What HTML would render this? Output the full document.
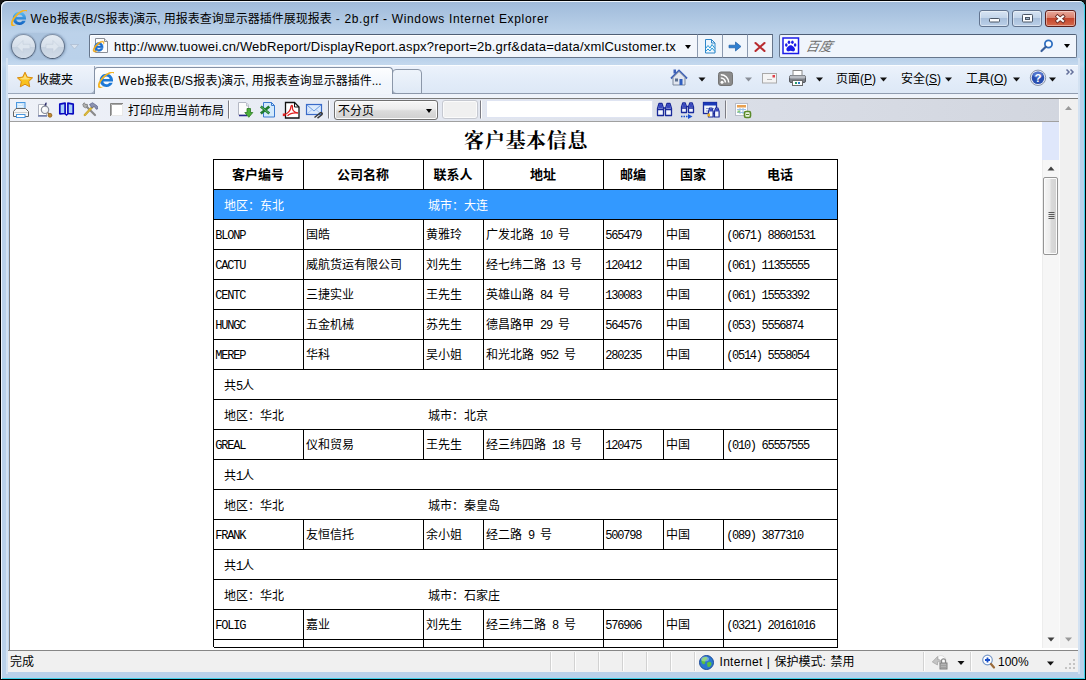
<!DOCTYPE html>
<html lang="zh-CN">
<head>
<meta charset="utf-8">
<title>Web报表(B/S报表)演示, 用报表查询显示器插件展现报表 - 2b.grf - Windows Internet Explorer</title>
<style>
*{box-sizing:border-box;margin:0;padding:0}
html,body{width:1086px;height:680px;overflow:hidden;background:#1a1a1a}
body{font-family:"Liberation Sans","Noto Sans CJK SC",sans-serif;font-size:12px;color:#000;position:relative}
.abs{position:absolute}
#win{position:absolute;left:0;top:0;width:1086px;height:680px;border-radius:7px 7px 0 0;background:#000;overflow:hidden}
#frame{position:absolute;left:1px;top:1px;width:1084px;height:678px;border-radius:6px 6px 0 0;
 background:linear-gradient(180deg,#9fb9d8 0px,#a6c0de 8px,#b3cbe5 22px,#bcd2ea 32px,#bad1ea 58px,#c3d8ee 63px,#b9d1ea 70px,#b9d1ea 100%);
 box-shadow:inset 1px 1px 0 #eef4fb, inset -1px 0 0 #3fd0e8, inset 0 -1px 0 #3fd0e8}
#title{left:30.5px;top:11px;font-size:12px;line-height:16px;white-space:nowrap;color:#000;letter-spacing:0px}
/* caption buttons */
.cap{position:absolute;top:10px;height:17px;border:1px solid #62748f;border-radius:3px;
 background:linear-gradient(180deg,#d7e4f3 0,#c3d5ea 45%,#a8bfdb 50%,#bcd0e8 100%);box-shadow:inset 0 0 0 1px rgba(255,255,255,.42)}
#cmin{left:979px;width:30px}
#cmax{left:1012px;width:30px}
#cclose{left:1045px;width:31px;border-color:#5b1f1c;background:linear-gradient(180deg,#e9a99b 0,#d9806d 45%,#c4452c 50%,#d46a4d 100%)}
/* nav */
.circ{position:absolute;top:34px;width:25px;height:25px;border-radius:50%;border:1px solid #62748c;border-top-color:#8292a8;border-bottom-color:#4c5c72;background:linear-gradient(180deg,#e4ebf3 0,#d6dfea 50%,#c6d2e0 52%,#d2dce8 100%);box-shadow:0 0 0 1px rgba(120,142,172,.35)}
#addr{left:89px;top:34px;width:608px;height:24px;border:1px solid #66768c;border-top-color:#4f5f76;border-right:none;background:#f2f6fc;box-shadow:inset 1px 1px 0 #fff;border-radius:2px 0 0 2px}
.abtn{position:absolute;top:34px;width:26px;height:24px;border:1px solid #66768c;border-top-color:#4f5f76;border-left:1px solid #8b9ab0;background:#f0f5fb}
#search{left:779px;top:34px;width:298px;height:24px;border:1px solid #66768c;border-top-color:#4f5f76;background:#f0f5fc;border-radius:2px}
#url{left:114px;top:38.7px;font-size:13px;line-height:16px;white-space:nowrap;letter-spacing:.18px}
/* command bar */
#cmdbar{left:8px;top:65px;width:1070px;height:33px;background:linear-gradient(180deg,#fbfdff 0,#fbfdff 1px,#ecf2fb 1px,#e4edf9 12px,#dde8f6 28px,#919db0 28px,#919db0 29px,#edf2fa 29px,#f1f5fb 33px)}
#fav{left:8px;top:66px;width:87px;height:28px;background:linear-gradient(180deg,#eef3fb,#dde7f5);border-radius:0 0 5px 0;border-right:1px solid #9aa7ba;border-bottom:1px solid #9aa7ba}
#tab{left:94px;top:67px;width:299px;height:27px;border:1px solid #8491a5;border-bottom:none;border-radius:4px 4px 0 0;background:linear-gradient(180deg,#fdfeff 0,#f1f6fc 60%,#f1f5fb 100%)}
#newtab{left:392px;top:69px;width:30px;height:25px;border:1px solid #8b97a9;border-radius:4px 4px 0 4px;background:linear-gradient(180deg,#eef4fb,#dfe9f6)}
.cmdtxt{position:absolute;top:71px;font-size:12px;line-height:16px;white-space:nowrap}
.tri{position:absolute;width:0;height:0;border-left:4px solid transparent;border-right:4px solid transparent;border-top:4px solid #000}
/* content */
#content{left:9px;top:98px;width:1069px;height:552px;background:#fff;border-top:1px solid #7b7b7b;border-left:1px solid #7b7b7b}
#tb{left:10px;top:99px;width:1049px;height:23px;background:linear-gradient(90deg,#eef1f8 0,#e6eaf3 35%,#dbdfe8 65%,#d2d6df 100%);border-bottom:1px solid #a0a0a0}
#status{left:8px;top:651px;width:1070px;height:21px;background:#f0f0f0}

/* report */
#rtitle{left:464px;top:129px;width:124px;font:bold 20px/24px "Liberation Serif","Noto Serif CJK SC",serif;letter-spacing:0.7px;white-space:nowrap}
#grid{left:213px;top:159px;width:625px;height:488px;border-top:1px solid #000;overflow:hidden;font:12px/16px "Liberation Mono","Noto Sans CJK SC",monospace}
.r{position:relative;height:30px;border-bottom:1px solid #000;border-left:1px solid #000;border-right:1px solid #000;width:625px}
.r span{position:absolute;top:0;height:29px;border-left:1px solid #000;padding:8px 0 0 2px;white-space:nowrap;overflow:hidden}
.r .c1{left:-1px;width:90px}.r .c2{left:89px;width:120px}.r .c3{left:209px;width:60px}.r .c4{left:269px;width:120px}
.r .c5{left:389px;width:60px}.r .c6{left:449px;width:60px}.r .c7{left:509px;width:114px;padding-left:3px}
.r.h span{font:bold 13px/16px "Liberation Sans","Noto Sans CJK SC",sans-serif;text-align:center;padding:7px 1px 0 0}
.r.g span{border-left:none}
.r.g span{padding-top:9px}
.r.g .a{left:8px}.r.g .b{left:212px}
.r.sel{background:#3399ff;color:#fff}
.r i{font-style:normal;letter-spacing:-1.2px}
.r .c1 i,.r .c5 i,.r .c7 i{margin-left:-.8px}
.r .c7 i{letter-spacing:-1.3px}
.cjk{font-family:"Liberation Sans","Noto Sans CJK SC",sans-serif}
.song{font-family:"Liberation Mono","Noto Sans CJK SC",monospace}
</style>
</head>
<body>
<div id="win">
<div id="frame"></div>
<svg class="abs" style="left:11px;top:10px" width="16" height="16" viewBox="0 0 16 16">
<defs><linearGradient id="ieb1" x1="0" y1="0" x2="0" y2="1"><stop offset="0" stop-color="#5cc0f5"/><stop offset="1" stop-color="#0f5fc0"/></linearGradient></defs>
<g transform="translate(-1.100 -1.300) scale(1.150)"><path d="M8.3 2.6c3.3 0 5.7 2.5 5.7 5.9v.9H5.6c.2 1.500 1.300 2.400 2.800 2.400 1.100 0 2-.5 2.500-1.300h2.800c-.8 2.300-2.800 3.700-5.400 3.700C4.900 14.200 2.500 11.700 2.500 8.400 2.500 5.100 4.900 2.600 8.300 2.600zM5.600 7.300h5.500C10.900 5.900 9.800 5 8.400 5 6.900 5 5.900 5.900 5.600 7.300z" fill="url(#ieb1)"/>
<path d="M1.300 14.600C-.3 12.500 2.300 7.400 6.400 4 10 1 13.700 0 15 1.500c.6.700.4 2-.3 3.400.3-1.200.3-2.100-.2-2.600-1-1.100-4 .1-7 2.700C4.100 8.100 1.800 12 2.700 13.600c.5.900 2 .7 3.800-.2-2.200 1.700-4.300 2.300-5.200 1.200z" fill="#f4b322"/></g>
</svg>
<div id="title" class="abs"><span style="letter-spacing:.68px">Web</span><span style="letter-spacing:.2px">报表</span><span style="letter-spacing:.16px">(B/S</span><span style="letter-spacing:.2px">报表</span><span style="letter-spacing:-.5px">)</span>演示<span style="letter-spacing:-.13px">, </span>用报表查询显示器插件展现报表<span style="letter-spacing:.66px"> - 2b.grf - Windows Internet Explorer</span></div>
<div id="cmin" class="cap"></div><div id="cmax" class="cap"></div><div id="cclose" class="cap"></div>
<svg class="abs" style="left:979px;top:10px" width="98" height="17" viewBox="0 0 98 17">
<rect x="10.500" y="8.500" width="10" height="3.500" rx=".8" fill="#fbfcfe" stroke="#4b5766" stroke-width="1"/>
<rect x="43.500" y="4.500" width="10" height="7.500" rx=".8" fill="#fbfcfe" stroke="#4b5766" stroke-width="1"/><rect x="46.500" y="7.500" width="4" height="2" fill="#9fb2c8" stroke="#4b5766" stroke-width="1"/>
<path d="M78.500 6.500l5.500 4.500M84 6.500l-5.500 4.500" stroke="#6a2a22" stroke-width="3.800" stroke-linecap="square"/><path d="M78.500 6.500l5.500 4.500M84 6.500l-5.500 4.500" stroke="#fbfbfb" stroke-width="2.200" stroke-linecap="square"/>
</svg>
<div class="abs" style="left:9px;top:33px;width:58px;height:27px;border-radius:13.5px;background:rgba(120,145,180,.22);box-shadow:0 0 2px rgba(120,145,180,.3)"></div>
<div class="circ" style="left:11px"></div><div class="circ" style="left:40px"></div>
<svg class="abs" style="left:11px;top:34px" width="70" height="26" viewBox="0 0 70 26">
<path d="M6 12.500l6-6v3.800h7v4.400h-7v3.800z" fill="#dde5ee" stroke="#c3cedc" stroke-width=".6"/>
<path d="M48 12.500l-6-6v3.800h-7v4.400h7v3.800z" fill="#dde5ee" stroke="#c3cedc" stroke-width=".6"/>
<path d="M59.500 10.500h8l-4 4.500z" fill="#d9e3ef" stroke="#a9b9ce" stroke-width=".7"/>
</svg>
<div id="addr" class="abs"></div>
<svg class="abs" style="left:91px;top:37px" width="19" height="18" viewBox="0 0 19 18">
<path d="M4.500 1.500h9l3 3v11h-12z" fill="#fdfdfd" stroke="#8a8f98" stroke-width="1"/><path d="M13.500 1.500v3h3" fill="#e8e8e8" stroke="#8a8f98" stroke-width="1"/>
<g transform="translate(.800 0)"><path d="M7 5.600c2.500 0 4.300 1.900 4.300 4.400v.7H5c.2 1.100 1 1.800 2.100 1.800.8 0 1.500-.4 1.900-1h2.100c-.6 1.700-2.100 2.800-4.100 2.800-2.500 0-4.300-1.900-4.300-4.400S4.500 5.600 7 5.600zM5 9.100h4.100C8.900 8.100 8.100 7.400 7.100 7.400S5.200 8.100 5 9.100z" fill="#1c6fd0" stroke="#1c6fd0" stroke-width=".6"/>
<path d="M1.700 14.600C.5 13 2.400 9.200 5.500 6.600 8.200 4.400 11 3.600 12 4.800c.4.500.3 1.500-.2 2.500.2-.9.200-1.600-.2-1.900-.7-.8-3 .1-5.200 2C3.800 9.700 2.100 12.600 2.700 13.800c.4.700 1.500.5 2.900-.1-1.700 1.300-3.200 1.700-3.900.9z" fill="#f0a818" stroke="#f0a818" stroke-width=".5"/></g>
</svg>
<div class="tri" style="left:685px;top:45px;border-left-width:3.500px;border-right-width:3.500px;border-top-width:4px"></div>
<div id="url" class="abs">http://www.tuowei.cn/WebReport/DisplayReport.aspx?report=2b.grf&amp;data=data/xmlCustomer.tx</div>
<div class="abtn" style="left:697px"></div><div class="abtn" style="left:722px"></div><div class="abtn" style="left:747px"></div>
<svg class="abs" style="left:698px;top:34px" width="75" height="24" viewBox="0 0 75 24">
<g fill="none" stroke="#2f86c8" stroke-width="1"><path d="M7.500 5.500h6l3.500 3.500v10h-9.500z" fill="#eef6fd"/><path d="M13.500 5.500v3.500h3.500"/><path d="M7.500 14.500l2.500-3 2 2.500 2-3.500 3 4" stroke="#2a9ad8"/><path d="M7.500 17.500l2.500-2.500 2 2 2-3 3 3.500" stroke="#2a9ad8"/></g>
<path d="M31 11.200h6.500V8l5.500 4.500-5.500 4.500v-3.200H31z" fill="#2f7fd0" stroke="#1d5fa8" stroke-width=".7" stroke-linejoin="round"/>
<path d="M57.500 9l9 8M66.500 9l-9 8" stroke="#b82a2e" stroke-width="2.100" stroke-linecap="round"/>
</svg>
<div id="search" class="abs"></div>
<svg class="abs" style="left:781px;top:36px" width="20" height="20" viewBox="0 0 20 20">
<rect x="2" y="2" width="15.500" height="15.500" fill="#fff" stroke="#1c1ce8" stroke-width="1.500"/>
<g fill="#1c1ce8"><path d="M9.700 9.300c2 0 4.300 2.500 4.300 4.300 0 1.600-1.600 2-2.500 1.700-.8-.3-1.200-.6-1.800-.6s-1 .3-1.800.6c-.9.300-2.500-.1-2.500-1.700 0-1.800 2.300-4.300 4.300-4.300z"/><ellipse cx="5.300" cy="9" rx="1.300" ry="1.700"/><ellipse cx="8" cy="6.300" rx="1.300" ry="1.700"/><ellipse cx="11.400" cy="6.300" rx="1.300" ry="1.700"/><ellipse cx="14.100" cy="9" rx="1.300" ry="1.700"/></g>
</svg>
<div class="abs" style="left:805.5px;top:38.5px;font:italic 13px/16px 'Liberation Sans','Noto Sans CJK SC',sans-serif;color:#6d6d6d;transform:skewX(-12deg);white-space:nowrap">百度</div>
<svg class="abs" style="left:1039px;top:38px" width="16" height="16" viewBox="0 0 16 16"><circle cx="9.500" cy="6" r="3.600" fill="#fdfeff" stroke="#2f6fc0" stroke-width="1.800"/><path d="M6.800 8.800L2.500 13" stroke="#3a5f9a" stroke-width="2.200" stroke-linecap="round"/></svg>
<div class="tri" style="left:1064px;top:44px;border-left-width:3.500px;border-right-width:3.500px"></div>
<div class="abs" style="left:1078px;top:58px;width:2px;height:616px;background:#d3e2f2"></div>
<div class="abs" style="left:6px;top:58px;width:2px;height:616px;background:#d3e2f2"></div>
<div id="cmdbar" class="abs"></div>
<div id="fav" class="abs"></div>
<div id="tab" class="abs"></div>
<div id="newtab" class="abs"></div>
<svg class="abs" style="left:16px;top:71px" width="18" height="17" viewBox="0 0 18 17"><path d="M9 1.200l2.300 4.900 5.300.7-3.900 3.700 1 5.300L9 13.200l-4.700 2.600 1-5.300L1.400 6.800l5.300-.7z" fill="#f9c21e" stroke="#d98a10" stroke-width="1" stroke-linejoin="round"/><path d="M9 3.200l1.600 3.600 3.600.4-2.200 1.300H6.200L3.800 7.200l3.600-.4z" fill="#fde58a" opacity=".8"/></svg>
<div class="cmdtxt" style="left:37px;top:71.5px">收藏夹</div>
<svg class="abs" style="left:98px;top:72px" width="16" height="16" viewBox="0 0 16 16">
<g transform="translate(-1.100 -1.300) scale(1.150)"><path d="M8.300 2.600c3.300 0 5.700 2.500 5.700 5.900v.9H5.600c.2 1.500 1.300 2.400 2.800 2.400 1.100 0 2-.5 2.500-1.300h2.800c-.8 2.300-2.800 3.700-5.400 3.700C4.900 14.200 2.500 11.700 2.500 8.400 2.500 5.100 4.900 2.600 8.300 2.600zM5.600 7.300h5.500C10.900 5.900 9.800 5 8.400 5 6.900 5 5.900 5.900 5.600 7.300z" fill="#1c78d6"/>
<path d="M1.300 14.600C-.3 12.500 2.300 7.400 6.400 4 10 1 13.700 0 15 1.500c.6.700.4 2-.3 3.400.3-1.200.3-2.100-.2-2.600-1-1.100-4 .1-7 2.700C4.100 8.100 1.800 12 2.700 13.600c.5.900 2 .7 3.800-.2-2.200 1.700-4.300 2.300-5.200 1.200z" fill="#f4b322"/></g>
</svg>
<div class="cmdtxt" style="left:118.4px;top:72.8px"><span style="letter-spacing:.68px">Web</span><span style="letter-spacing:.2px">报表</span><span style="letter-spacing:.16px">(B/S</span><span style="letter-spacing:.2px">报表</span><span style="letter-spacing:-.5px">)</span>演示<span style="letter-spacing:-.13px">, </span>用报表查询显示器插件...</div>
<svg class="abs" style="left:668px;top:67px" width="410" height="22" viewBox="0 0 410 22">
<!-- home -->
<path d="M3 11.500L11 3.500l8 8" fill="none" stroke="#3b5fb8" stroke-width="1.800"/><path d="M5.500 2.500h2.500v4h-2.500z" fill="#3b5fb8"/><path d="M5 10.500l6-6 6 6v7.500H5z" fill="#e2e6ee" stroke="#7d899d" stroke-width="1"/><rect x="11.500" y="12" width="3" height="6" fill="#2f5fc0"/><rect x="7" y="11.500" width="3" height="3" fill="#5a6f8f"/>
<path d="M30.500 10.500h7l-3.500 4z" fill="#111"/>
<!-- rss -->
<rect x="50.500" y="5" width="14" height="13.500" rx="2.500" fill="#8b8b8b" stroke="#747474" stroke-width="1"/><circle cx="54" cy="15.200" r="1.500" fill="#fff"/><path d="M52.800 11a4.500 4.500 0 0 1 4.600 4.600M52.800 7.800a7.800 7.800 0 0 1 7.900 7.800" fill="none" stroke="#fff" stroke-width="1.500"/>
<path d="M77 10.500h7l-3.500 4z" fill="#8a8f98"/>
<!-- mail -->
<rect x="94.500" y="6.500" width="14" height="9.500" fill="#f4f4f4" stroke="#a9a9a9" stroke-width="1"/><rect x="104.500" y="8" width="2.500" height="2.500" fill="#e0404a"/><path d="M99 12.500h5" stroke="#b5b5b5" stroke-width="1"/>
<!-- printer -->
<rect x="125" y="3.500" width="9" height="6" fill="#fff" stroke="#8a8a8a" stroke-width="1"/><rect x="121.500" y="8.500" width="16" height="7" rx="1.500" fill="#7c8088" stroke="#55585e" stroke-width="1"/><rect x="121.500" y="8.500" width="16" height="3" rx="1.500" fill="#b9bdc4"/><rect x="124.500" y="13.500" width="10" height="5" fill="#fdfdfd" stroke="#6a6a6a" stroke-width="1"/><rect x="127" y="15" width="2" height="2" fill="#2a9a6a"/><rect x="130" y="15" width="2" height="2" fill="#2a7ac8"/>
<path d="M148 10.500h7l-3.500 4z" fill="#111"/>
<path d="M212 10.500h7l-3.500 4z" fill="#111"/>
<path d="M277 10.500h7l-3.500 4z" fill="#111"/>
<path d="M345 10.500h7l-3.500 4z" fill="#111"/>
<!-- help -->
<circle cx="370" cy="10.800" r="7.700" fill="#e8edf6" stroke="#8a93a6" stroke-width="1"/><circle cx="370" cy="10.800" r="6.300" fill="#2a4fb0"/><ellipse cx="370" cy="7.800" rx="4.800" ry="3" fill="#6f8fe0" opacity=".6"/>
<text x="370" y="15" font-family="Liberation Sans, sans-serif" font-weight="bold" font-size="11.500" fill="#fff" text-anchor="middle">?</text>
<path d="M381 10.500h7l-3.500 4z" fill="#111"/>
<path d="M398.500 2.500l2.500 2.500-2.500 2.500M402.500 2.500l2.500 2.500-2.500 2.500" fill="none" stroke="#64709a" stroke-width="1.500"/>
</svg>
<div class="cmdtxt" style="left:836px;top:71px">页面(<u>P</u>)</div>
<div class="cmdtxt" style="left:901px;top:71px">安全(<u>S</u>)</div>
<div class="cmdtxt" style="left:966px;top:71px">工具(<u>O</u>)</div>

<div id="content" class="abs"></div>
<div id="rtitle" class="abs">客户基本信息</div>
<div id="grid" class="abs">
<div class="r h"><span class="c1">客户编号</span><span class="c2">公司名称</span><span class="c3">联系人</span><span class="c4">地址</span><span class="c5">邮编</span><span class="c6">国家</span><span class="c7">电话</span></div>
<div class="r g sel"><span class="a">地区：东北</span><span class="b">城市：大连</span></div>
<div class="r"><span class="c1"><i>BLONP</i></span><span class="c2">国皓</span><span class="c3">黄雅玲</span><span class="c4">广发北路<i> 10 </i>号</span><span class="c5"><i>565479</i></span><span class="c6">中国</span><span class="c7"><i>(0671) 88601531</i></span></div>
<div class="r"><span class="c1"><i>CACTU</i></span><span class="c2">威航货运有限公司</span><span class="c3">刘先生</span><span class="c4">经七纬二路<i> 13 </i>号</span><span class="c5"><i>120412</i></span><span class="c6">中国</span><span class="c7"><i>(061) 11355555</i></span></div>
<div class="r"><span class="c1"><i>CENTC</i></span><span class="c2">三捷实业</span><span class="c3">王先生</span><span class="c4">英雄山路<i> 84 </i>号</span><span class="c5"><i>130083</i></span><span class="c6">中国</span><span class="c7"><i>(061) 15553392</i></span></div>
<div class="r"><span class="c1"><i>HUNGC</i></span><span class="c2">五金机械</span><span class="c3">苏先生</span><span class="c4">德昌路甲<i> 29 </i>号</span><span class="c5"><i>564576</i></span><span class="c6">中国</span><span class="c7"><i>(053) 5556874</i></span></div>
<div class="r"><span class="c1"><i>MEREP</i></span><span class="c2">华科</span><span class="c3">吴小姐</span><span class="c4">和光北路<i> 952 </i>号</span><span class="c5"><i>280235</i></span><span class="c6">中国</span><span class="c7"><i>(0514) 5558054</i></span></div>
<div class="r g"><span class="a">共<i>5</i>人</span></div>
<div class="r g"><span class="a">地区：华北</span><span class="b">城市：北京</span></div>
<div class="r"><span class="c1"><i>GREAL</i></span><span class="c2">仪和贸易</span><span class="c3">王先生</span><span class="c4">经三纬四路<i> 18 </i>号</span><span class="c5"><i>120475</i></span><span class="c6">中国</span><span class="c7"><i>(010) 65557555</i></span></div>
<div class="r g"><span class="a">共<i>1</i>人</span></div>
<div class="r g"><span class="a">地区：华北</span><span class="b">城市：秦皇岛</span></div>
<div class="r"><span class="c1"><i>FRANK</i></span><span class="c2">友恒信托</span><span class="c3">余小姐</span><span class="c4">经二路<i> 9 </i>号</span><span class="c5"><i>500798</i></span><span class="c6">中国</span><span class="c7"><i>(089) 3877310</i></span></div>
<div class="r g"><span class="a">共<i>1</i>人</span></div>
<div class="r g"><span class="a">地区：华北</span><span class="b">城市：石家庄</span></div>
<div class="r"><span class="c1"><i>FOLIG</i></span><span class="c2">嘉业</span><span class="c3">刘先生</span><span class="c4">经三纬二路<i> 8 </i>号</span><span class="c5"><i>576906</i></span><span class="c6">中国</span><span class="c7"><i>(0321) 20161016</i></span></div>
<div class="r"><span class="c1"></span><span class="c2"></span><span class="c3"></span><span class="c4"></span><span class="c5"></span><span class="c6"></span><span class="c7"></span></div>
</div>
<div id="tb" class="abs"></div>
<svg class="abs" style="left:10px;top:99px" width="760" height="22" viewBox="0 0 760 22">
<!-- printer 13..29 -->
<rect x="6.500" y="3.500" width="8.500" height="6.500" fill="#cfe6fb" stroke="#4a98e0" stroke-width="1"/><path d="M8 5.500h4M8 7.500h5" stroke="#eaf5fe" stroke-width="1"/>
<path d="M6 9.500h9.500l3 3v5h-15v-5z" fill="#f6f6f6" stroke="#646464" stroke-width="1" stroke-linejoin="round"/><path d="M4.500 13.500h13" stroke="#cfcfcf" stroke-width="1"/>
<rect x="6.500" y="15.500" width="8.500" height="3" fill="#fff" stroke="#4a98e0" stroke-width="1"/>
<!-- preview 37..52 -->
<path d="M28.500 5.500h8v11h-8z" fill="#fdfdfd" stroke="#b0b4c0" stroke-width="1"/><path d="M28 17h9" stroke="#3a4a8a" stroke-width="1.200"/>
<path d="M35 7l1-2.800" stroke="#2a2a6a" stroke-width="1.400" stroke-linecap="round"/>
<circle cx="35" cy="10.800" r="3.700" fill="#f2f4f7" stroke="#8a8f9c" stroke-width="1.200"/><circle cx="34" cy="9.800" r="1.500" fill="#fff"/>
<ellipse cx="40" cy="16.300" rx="1.900" ry="2" fill="#c08a30" stroke="#8a5a1a" stroke-width=".7"/><path d="M37.800 13.600l1.300 1.500" stroke="#8a6a3a" stroke-width="1.400"/>
<!-- book 59..74 -->
<path d="M49.800 5.200l5.300-1v10.300l-5.300 .3zM63.200 5.200l-5.300-1v10.300l5.300 .3z" fill="#a8d0f8" stroke="#0a0ac0" stroke-width="1.700" stroke-linejoin="round"/><path d="M55 14.800l1.500 1.200 1.500-1.200" fill="none" stroke="#0a0ac0" stroke-width="1.400"/>
<!-- tools 82..98 -->
<path d="M75.500 6.500l9.500 9.500" stroke="#8a8a8a" stroke-width="2.200" stroke-linecap="round"/><path d="M72.800 5.200l1.500-1.500 1.200 1.800 1.800-.2.200 2-2 1.500-2-1z" fill="#b0b0b0" stroke="#707070" stroke-width=".7"/>
<path d="M74.800 16l8-8.500" stroke="#c8a020" stroke-width="2.300" stroke-linecap="round"/><path d="M74.800 16l8-8.500" stroke="#e8d060" stroke-width=".8" stroke-linecap="round"/>
<path d="M79.500 5.500l3-1.800 4.800 3.300.3 3-1.600.2-.8-2-1.700-.5-1.500 1.300z" fill="#8a92b0" stroke="#5a6288" stroke-width=".7"/>
<!-- checkbox 110..123 -->
<rect x="100.500" y="4.500" width="12" height="12" fill="#fff" stroke="#e8e8e8" stroke-width="1"/><path d="M100.500 17v-12.500h12.500" fill="none" stroke="#858585" stroke-width="1"/><path d="M101.500 16v-10.500h10.500" fill="none" stroke="#a8a8a8" stroke-width="1"/>
<!-- sep 228 -->
<path d="M218.500 1.500v18" stroke="#7c7c84" stroke-width="1"/><path d="M219.500 1.500v18" stroke="#fff" stroke-width="1"/>
<!-- export 238..253 -->
<path d="M228.500 3.500h7.500l2.500 2.500v10h-10z" fill="#fdfdfd" stroke="#b4b8c4" stroke-width="1"/><path d="M229 16.500h8" stroke="#2a2a8a" stroke-width="1.400"/><path d="M236.500 4v3h2.500" fill="#e0e4ec" stroke="#b4b8c4" stroke-width=".8"/>
<path d="M237 9.500h3.500v4h2.300l-4 4.800-4-4.800h2.200z" fill="#4cae3a" stroke="#2a7a20" stroke-width=".8" stroke-linejoin="round"/>
<!-- excel 260..275 -->
<path d="M253.500 3.500h8l3 3v11.500h-11z" fill="#d4eafc" stroke="#3a7ad0" stroke-width="1"/><path d="M261.500 3.500v3h3" fill="none" stroke="#3a7ad0" stroke-width="1"/>
<path d="M250.800 7.500l8.500 7M259.300 7.500l-8.500 7" stroke="#1e7a30" stroke-width="2.600"/><path d="M251.300 8l7.500 6" stroke="#6ac070" stroke-width=".9"/>
<!-- pdf 283..299 -->
<path d="M275.500 3.500h9l4.500 4.500v11h-13.500z" fill="#fff" stroke="#111" stroke-width="1.300"/><path d="M284.500 3.500v4.500h4.500" fill="none" stroke="#111" stroke-width="1"/>
<path d="M274.500 15.500c3.500-1 6-4 6.500-8 .2-1.500 1.600-1.500 1.400.2-.4 3.300 1.800 5.800 5.600 6.300-3.800-.5-8 .3-10.500 2.800" fill="none" stroke="#e02020" stroke-width="1.300"/><rect x="272.800" y="14.500" width="2.600" height="2.600" fill="#e02020"/>
<!-- email 305..323 -->
<rect x="296.500" y="5.500" width="15" height="10" fill="#dceafc" stroke="#3a6ac8" stroke-width="1.200"/><path d="M297 6l7 6 7-6" fill="none" stroke="#6a9ae0" stroke-width="1"/><path d="M297 15l5-4.500M311 15l-5-4.500" stroke="#a8c4f0" stroke-width="1"/>
<path d="M304.500 18.500l5.500-4.500c1.500-1 3 .5 1.800 1.800l-4.300 3.400" fill="none" stroke="#3a3a3a" stroke-width="1.500"/>
<!-- sep 328 -->
<path d="M318.500 1.500v18" stroke="#7c7c84" stroke-width="1"/><path d="M319.500 1.500v18" stroke="#fff" stroke-width="1"/>
<!-- sep 480 -->
<path d="M470.500 1.500v18" stroke="#7c7c84" stroke-width="1"/><path d="M471.500 1.500v18" stroke="#fff" stroke-width="1"/>
<!-- binoculars 656..672 -->
<path d="M647.500 9.500l1.500-5h3l1.500 5v7h-6zM655.500 9.500l1.500-5h3l1.500 5v7h-6z" fill="#f4f7fe" stroke="#1a2a9a" stroke-width="1.300" stroke-linejoin="round"/><path d="M648 9.500l1.300-4.500h2.400l1.300 4.500zM656 9.500l1.300-4.500h2.400l1.300 4.500z" fill="#3a4ac0"/><path d="M647.500 10.500h6M655.500 10.500h6" stroke="#1a2a9a" stroke-width="1.400"/><path d="M653 9h3" stroke="#1a2a9a" stroke-width="1.500"/>
<!-- binoculars next 680..694 -->
<path d="M671.500 8l1.300-4h2.400l1.300 4v5.500h-5zM678.500 8l1.300-4h2.400l1.300 4v5.500h-5z" fill="#f4f7fe" stroke="#1a2a9a" stroke-width="1.300" stroke-linejoin="round"/><path d="M672 8l1.100-3.600h2l1.100 3.600zM679 8l1.100-3.600h2l1.100 3.600z" fill="#3a4ac0"/><path d="M671.500 9h5M678.500 9h5" stroke="#1a2a9a" stroke-width="1.300"/><path d="M676 7.500h3" stroke="#1a2a9a" stroke-width="1.400"/>
<path d="M671 17.500h7" stroke="#1a50d0" stroke-width="1.400" stroke-dasharray="1.500 1"/><path d="M678 15l4.500 2.500-4.500 2.500z" fill="#1a50d0"/>
<!-- find window 702..719 -->
<rect x="693.500" y="3.500" width="13" height="11" fill="#eef4fc" stroke="#1a2a9a" stroke-width="1.300"/><rect x="693.500" y="3.500" width="13" height="3" fill="#1a3ab8"/><path d="M696 9.500h8M696 12h5" stroke="#8a9ac8" stroke-width="1"/>
<path d="M698.500 12.500l1.200-3.500h2.200l1.200 3.500v5.500h-4.600zM704.500 12.500l1.200-3.500h2.200l1.200 3.500v5.500h-4.600z" fill="#f4f7fe" stroke="#1a2a9a" stroke-width="1.200" stroke-linejoin="round"/><path d="M699 12.500l1-3h1.800l1 3zM705 12.500l1-3h1.800l1 3z" fill="#3a4ac0"/><rect x="697.500" y="14.500" width="2.500" height="3" fill="#f0b020"/>
<!-- sep 725 -->
<path d="M715.500 1.500v18" stroke="#7c7c84" stroke-width="1"/><path d="M716.500 1.500v18" stroke="#f4f4f4" stroke-width="1"/>
<!-- calendar 734..750 -->
<rect x="725.500" y="4.500" width="12" height="12" fill="#fdfdfd" stroke="#b8bcc8" stroke-width="1"/><rect x="727" y="6" width="9" height="2.500" fill="#e8a050"/><path d="M727 10.500h9M727 13.500h9M730 9v6M733 9v6" stroke="#9ac0e8" stroke-width="1"/><rect x="727.500" y="11.500" width="2.500" height="2" fill="#8ac878"/>
<rect x="734.500" y="12.500" width="6" height="6" rx="1.500" fill="#eaf4e0" stroke="#5a8a2a" stroke-width="1.600"/><path d="M736 15.500h3" stroke="#5a8a2a" stroke-width="1"/>
</svg>
<div class="abs cjk" style="left:128px;top:102.6px;font-size:12px;line-height:16px;white-space:nowrap">打印应用当前布局</div>
<div class="abs" style="left:334px;top:100px;width:104px;height:20px;border:1px solid #707070;border-radius:3px;background:linear-gradient(180deg,#f6f6f6 0,#ececec 45%,#dcdcdc 55%,#d0d0d0 100%);box-shadow:inset 0 0 0 1px #fcfcfc"></div>
<div class="abs cjk" style="left:338px;top:102.6px;font-size:12px;line-height:16px;white-space:nowrap">不分页</div>
<div class="tri" style="left:426px;top:109px;border-left-width:3.500px;border-right-width:3.500px"></div>
<div class="abs" style="left:442px;top:100px;width:36px;height:19px;border:1px solid #c6c9d1;border-radius:3px;background:#f0f0f0;box-shadow:inset 0 0 0 1px #fbfbfb"></div>
<div class="abs" style="left:486px;top:100px;width:167px;height:18px;border:1px solid #dfe4f2;background:#fff"></div>
<!-- scrollbars -->
<div class="abs" style="left:1042px;top:122px;width:17px;height:38px;background:#dfe7fb"></div>
<div class="abs" style="left:1042px;top:160px;width:17px;height:488px;background:#f6f6f6;border-left:1px solid #ededed"></div>
<div class="abs" style="left:1059px;top:99px;width:19px;height:549px;background:#f0f0f0;border-left:1px solid #fafafa"></div>
<div class="abs" style="left:1043px;top:177px;width:15px;height:78px;border:1px solid #959595;border-radius:2px;background:linear-gradient(90deg,#f6f6f6 0,#ececec 45%,#dadada 55%,#d2d2d2 100%);box-shadow:inset 0 0 0 1px #fbfbfb"></div>
<svg class="abs" style="left:1042px;top:99px" width="36" height="549" viewBox="-1 0 36 549">
<path d="M4.500 71.500l3.500-4 3.500 4z" fill="#404040"/><path d="M4.500 538.500l3.500 4 3.500-4z" fill="#404040"/>
<path d="M22 11l3.500-4 3.500 4z" fill="#9a9a9a"/><path d="M22 538.500l3.500 4 3.500-4z" fill="#9a9a9a"/>
<path d="M5.500 113.500h6M5.500 115.500h6M5.500 117.500h6M5.500 119.500h6" stroke="#5a5a5a" stroke-width="1"/>
</svg>
<div class="abs" style="left:214px;top:647px;width:624px;height:1px;background:#000"></div>

<div id="status" class="abs"></div>
<div class="abs" style="left:8px;top:650px;width:1070px;height:1px;background:#868686"></div>
<div class="abs cjk" style="left:10px;top:654px;font-size:12px;line-height:16px">完成</div>
<svg class="abs" style="left:540px;top:651px" width="538" height="21" viewBox="0 0 538 21">
<g stroke="#d2d2d2" stroke-width="1"><path d="M10.500 1v19M34.500 1v19M58.500 1v19M82.500 1v19M106.500 1v19M130.500 1v19M154.500 1v19M383.500 1v19M430.500 1v19"/></g>
<g stroke="#fdfdfd" stroke-width="1"><path d="M11.500 1v19M35.500 1v19M59.500 1v19M83.500 1v19M107.500 1v19M131.500 1v19M155.500 1v19M384.500 1v19M431.500 1v19"/></g>
<!-- globe 699..714 -->
<circle cx="166.500" cy="11.500" r="7" fill="#2a78d0" stroke="#1a4a9a" stroke-width="1"/><path d="M162 8c1.500-2 4-2.500 5-1.500s-.5 2-1.500 3 .5 2.500-1 3.500-2.500-.5-3-2 .5-2 .5-3zM168.500 11c1.500-.5 3 .5 3 2s-1.500 3-3 3-1-2-1.500-3 .5-1.500 1.500-2z" fill="#5ac040"/><ellipse cx="165" cy="8" rx="4" ry="2.500" fill="#fff" opacity=".35"/>
<!-- lock icon 932..948 -->
<path d="M398 5.500c3-2 7.500-.5 8 4v4h-6z" fill="#fbfbfb" stroke="#d4d4d4" stroke-width=".8"/><path d="M392.300 11l5.200-5.500v3c2.500 0 4 1 4.500 3-1.500-.8-3-.9-4.500-.7v3.200z" fill="#c4c4c4" stroke="#a2a2a2" stroke-width=".7"/><path d="M401.500 12v-2.200a2 2 0 0 1 4 0v2.200" fill="none" stroke="#8a8a8a" stroke-width="1.200"/><rect x="400" y="12" width="7" height="6" fill="#b4b4b4" stroke="#808080" stroke-width="1"/><path d="M400.500 14.500h6M400.500 16.500h6" stroke="#9a9a9a" stroke-width=".8"/>
<path d="M417.500 10h7l-3.500 4z" fill="#111"/>
<!-- zoom icon 982..994 -->
<circle cx="447.500" cy="9" r="4.800" fill="#fff" stroke="#7a9ac8" stroke-width="1.200"/><path d="M445 9h5M447.500 6.500v5" stroke="#1a50c8" stroke-width="1.800"/><path d="M451 13l3 3.500" stroke="#9a6a3a" stroke-width="2.200" stroke-linecap="round"/>
<path d="M507 10.500h7l-3.500 4z" fill="#111"/>
<g fill="#c4c4c4"><rect x="533" y="8" width="2" height="2"/><rect x="529" y="12" width="2" height="2"/><rect x="533" y="12" width="2" height="2"/><rect x="525" y="16" width="2" height="2"/><rect x="529" y="16" width="2" height="2"/><rect x="533" y="16" width="2" height="2"/></g>
</svg>
<div class="abs cjk" style="left:719.5px;top:654px;font-size:12px;line-height:16px;white-space:pre"><span style="letter-spacing:.3px">Internet</span><span style="letter-spacing:.73px"> | </span>保护模式<span style="letter-spacing:.67px">: </span>禁用</div>
<div class="abs" style="left:998px;top:654px;font-size:12px;line-height:16px;white-space:nowrap">100%</div>

</div>
</body>
</html>
